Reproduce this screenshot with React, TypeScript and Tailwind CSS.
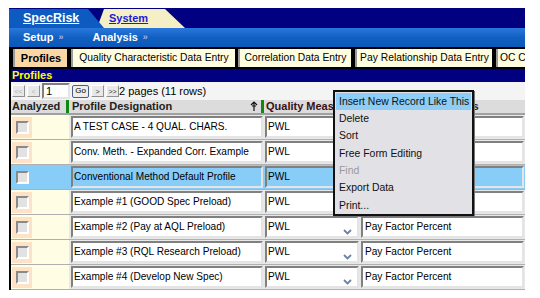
import React from 'react';

type Row = { name: string; q: string; pay: string; selected?: boolean };

const rows: Row[] = [
  { name: 'A TEST CASE - 4 QUAL. CHARS.', q: 'PWL', pay: '' },
  { name: 'Conv. Meth. - Expanded Corr. Example', q: 'PWL', pay: '' },
  { name: 'Conventional Method Default Profile', q: 'PWL', pay: '', selected: true },
  { name: 'Example #1 (GOOD Spec Preload)', q: 'PWL', pay: '' },
  { name: 'Example #2 (Pay at AQL Preload)', q: 'PWL', pay: 'Pay Factor Percent' },
  { name: 'Example #3 (RQL Research Preload)', q: 'PWL', pay: 'Pay Factor Percent' },
  { name: 'Example #4 (Develop New Spec)', q: 'PWL', pay: 'Pay Factor Percent' },
];

const tabs = [
  { label: 'Profiles', cls: 'ml-[4px] w-[54px] justify-center', active: true },
  { label: 'Quality Characteristic Data Entry', cls: 'ml-[4px] w-[164px] justify-center' },
  { label: 'Correlation Data Entry', cls: 'ml-[3px] w-[113px] justify-center' },
  { label: 'Pay Relationship Data Entry', cls: 'ml-[4px] w-[137px] justify-center' },
  { label: 'OC Curves', cls: 'ml-[4px] w-[40px] pl-[2px]' },
];

const menuItems = ['Insert New Record Like This', 'Delete', 'Sort', 'Free Form Editing', 'Find', 'Export Data', 'Print...'];

const inset = 'border-2 border-t-[#808080] border-l-[#808080] border-b-[#e4e4e4] border-r-[#e4e4e4]';

const Chevron = () => (
  <svg width="9" height="6" viewBox="0 0 9 6" className="absolute right-[5px] bottom-[1px]">
    <path d="M1 1 L4.5 4.5 L8 1" fill="none" stroke="#6a82a8" strokeWidth="1.8" />
  </svg>
);

const PagerBtn = ({ label, dim }: { label: string; dim?: boolean }) => (
  <div className={`w-[13px] h-[12px] bg-[#e8e8e8] border border-t-white border-l-white border-b-[#909090] border-r-[#909090] flex items-center justify-center text-[7px] leading-none ${dim ? 'text-[#b0b0b0]' : 'text-[#333]'}`}>
    {label}
  </div>
);

export default function App() {
  return (
    <div className="w-[540px] h-[298px] bg-white overflow-hidden relative font-['Liberation_Sans',Arial,sans-serif]">
      <div className="pt-[8px] pl-[9px] w-[525px]">
        {/* application tabs */}
        <div className="h-[20px] bg-[#000080] pt-[1px] flex">
          <div className="relative z-10 w-[95px] h-[19px] bg-[#0d5bc0] [clip-path:polygon(0_0,79px_0,95px_100%,0_100%)] pl-[14px] flex items-center">
            <span className="text-white font-bold text-[12.5px] underline leading-none">SpecRisk</span>
          </div>
          <div className="-ml-[7px] w-[88px] h-[19px] bg-[#f4efc6] [clip-path:polygon(7px_0,68px_0,88px_100%,0_100%)] pl-[12px] flex items-center">
            <span className="text-[#1c1cd8] font-bold text-[11px] underline leading-none">System</span>
          </div>
        </div>
        {/* menu bar */}
        <div className="h-[19px] bg-gradient-to-b from-[#2a78dc] via-[#1060c2] to-[#0b58b8] flex items-center text-white font-bold text-[11px]">
          <span className="ml-[14px]">Setup</span>
          <span className="ml-[5px] text-[#9cb8e6] text-[9px]">»</span>
          <span className="ml-[29px]">Analysis</span>
          <span className="ml-[5px] text-[#9cb8e6] text-[9px]">»</span>
        </div>
        {/* page tabs */}
        <div className="h-[22px] bg-black flex py-[2px] overflow-hidden">
          {tabs.map(t => (
            <div
              key={t.label}
              className={`${t.cls} shrink-0 h-[18px] border-l-2 border-l-[#9a9a9a] flex items-center text-[10.3px] text-black whitespace-nowrap overflow-hidden ${t.active ? 'bg-[#fcd7a6] font-bold text-[11px]' : 'bg-[#fffde0]'}`}
            >
              {t.label}
            </div>
          ))}
        </div>
        <div className="border-l-2 border-black">
          {/* title */}
          <div className="h-[13px] bg-[#000080] text-[#ffff00] font-bold text-[11px] leading-[13px] pl-[1px]">Profiles</div>
          {/* pager */}
          <div className="h-[18px] bg-[#f4f4f4] flex items-center gap-[2px] pl-[1px]">
            <PagerBtn label="<<" dim />
            <PagerBtn label="<" dim />
            <div className={`w-[28px] h-[16px] bg-white ${inset} text-[11px] leading-[12px] pl-[2px] text-black`}>1</div>
            <div className="w-[17px] h-[13px] border border-[#4a5f88] rounded-[2px] bg-[#eeeeee] flex items-center justify-center text-[8px] text-black">Go</div>
            <PagerBtn label=">" />
            <PagerBtn label=">>" />
            <span className="text-[11px] text-black -ml-[2px]">2 pages (11 rows)</span>
          </div>
          {/* header */}
          <div className="h-[15px] bg-[#dcdcdc] border-b-2 border-b-[#a0a0a0] grid grid-cols-[58px_195px_96px_164px] text-[11px] font-bold text-[#222] leading-[13px]">
            <div className="flex items-center pl-[1px] relative">Analyzed<div className="absolute right-0 top-0 w-[3px] h-full bg-[#118811]" /></div>
            <div className="flex items-center pl-[3px] relative">
              Profile Designation
              <svg width="8" height="11" viewBox="0 0 8 11" className="absolute right-[6px] top-[1px]">
                <path d="M4 1 V10 M1 4 L4 1 L7 4 M2 5 H6" fill="none" stroke="#111" strokeWidth="1.2" />
              </svg>
              <div className="absolute right-0 top-0 w-[3px] h-full bg-[#118811]" />
            </div>
            <div className="flex items-center pl-[2px] text-[#3a1010] whitespace-nowrap overflow-hidden">Quality Measure</div>
            <div className="flex items-center pl-[2px] text-[10.6px] whitespace-nowrap overflow-hidden">Pay Relationship Basis</div>
          </div>
          {/* rows */}
          {rows.map(r => (
            <div
              key={r.name}
              className={`h-[25px] grid grid-cols-[58px_195px_96px_164px] border-b border-b-[#b0b0b0] ${r.selected ? 'bg-[#87cdf8]' : 'bg-[#e8e8e8]'}`}
            >
              <div className={`flex items-center pl-[1px] ${r.selected ? '' : 'bg-[#fffde3]'}`}>
                <div className={`w-[20px] h-[21px] flex items-center justify-center ${r.selected ? '' : 'bg-[#fde2c6]'}`}>
                  <div className="w-[13px] h-[13px] bg-[#e2e2e2] border-2 border-t-[#8a8a8a] border-l-[#8a8a8a] border-b-white border-r-white" />
                </div>
              </div>
              <div className="pl-[2px] pr-[1px] py-[1px]">
                <div className={`h-full ${inset} ${r.selected ? 'bg-[#87cdf8]' : 'bg-white'} text-[10.1px] text-black flex items-center pl-[1px] whitespace-nowrap overflow-hidden`}>{r.name}</div>
              </div>
              <div className="pl-[1px] pr-[1px] py-[1px]">
                <div className={`h-full relative ${inset} ${r.selected ? 'bg-[#87cdf8]' : 'bg-white'} text-[10.1px] text-black flex items-center pl-[1px]`}>
                  {r.q}
                  <Chevron />
                </div>
              </div>
              <div className="pl-[1px] py-[1px]">
                <div className={`h-full ${inset} ${r.selected ? 'bg-[#87cdf8]' : 'bg-white'} text-[10.1px] text-black flex items-center pl-[2px] whitespace-nowrap overflow-hidden`}>{r.pay}</div>
              </div>
            </div>
          ))}
        </div>
      </div>
      {/* context menu */}
      <div className="absolute left-[333px] top-[90px] w-[141px] h-[126px] bg-[#e2e1e6] border-2 border-[#111] pt-[1px] px-[1px] shadow-[1px_1px_0_#777]">
        {menuItems.map((m, i) => (
          <div
            key={m}
            className={`h-[17.3px] flex items-center pl-[3px] text-[10.4px] whitespace-nowrap ${i === 0 ? 'bg-[#8ecdf6] text-[#111]' : ''} ${m === 'Find' ? 'text-[#9a9a9a]' : 'text-[#111]'}`}
          >
            {m}
          </div>
        ))}
      </div>
    </div>
  );
}
